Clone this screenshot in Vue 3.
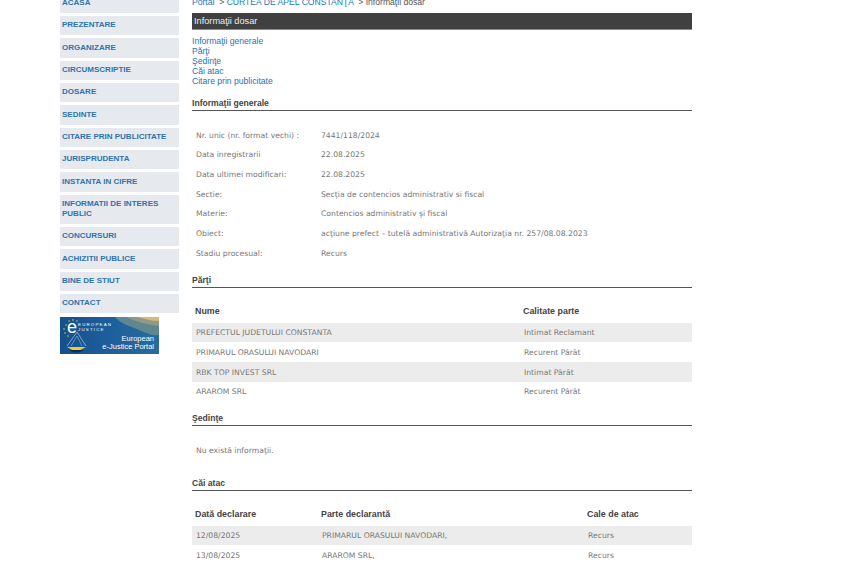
<script setup>
const nav = ['ACASA','PREZENTARE','ORGANIZARE','CIRCUMSCRIPTIE','DOSARE','SEDINTE','CITARE PRIN PUBLICITATE','JURISPRUDENTA','INSTANTA IN CIFRE','INFORMATII DE INTERES PUBLIC','CONCURSURI','ACHIZITII PUBLICE','BINE DE STIUT','CONTACT']
const links = ['Informaţii generale','Părţi','Şedinţe','Căi atac','Citare prin publicitate']
const info = [
  ['Nr. unic (nr. format vechi) :','7441/118/2024'],
  ['Data inregistrarii','22.08.2025'],
  ['Data ultimei modificari:','22.08.2025'],
  ['Sectie:','Secţia de contencios administrativ si fiscal'],
  ['Materie:','Contencios administrativ şi fiscal'],
  ['Obiect:','acţiune prefect – tutelă administrativă Autorizaţia nr. 257/08.08.2023'],
  ['Stadiu procesual:','Recurs'],
]
const parti = [
  ['PREFECTUL JUDETULUI CONSTANTA','Intimat Reclamant'],
  ['PRIMARUL ORASULUI NAVODARI','Recurent Pârât'],
  ['RBK TOP INVEST SRL','Intimat Pârât'],
  ['ARAROM SRL','Recurent Pârât'],
]
const cai = [
  ['12/08/2025','PRIMARUL ORASULUI NAVODARI,','Recurs'],
  ['13/08/2025','ARAROM SRL,','Recurs'],
]
</script>

<template>
  <div class="page">
    <aside class="side">
      <a v-for="n in nav" :key="n" class="nav" :class="{ two: n.length > 25 }">{{ n }}</a>
      <div class="banner">
        <svg class="banner-bg" width="99" height="37" viewBox="0 0 99 37">
          <defs>
            <linearGradient id="bg" x1="0" y1="0" x2="1" y2="0">
              <stop offset="0" stop-color="#14508c"/>
              <stop offset="0.5" stop-color="#1d5f9c"/>
              <stop offset="1" stop-color="#2a6c98"/>
            </linearGradient>
          </defs>
          <rect width="99" height="37" fill="url(#bg)"/>
          <path d="M55 0 L99 0 L99 18 C90 19 82 14 74 11 C66 8 59 5 55 0Z" fill="#5f8790"/>
          <path d="M66 0 L99 0 L99 9 C90 8 76 5 66 0Z" fill="#8f9a86"/>
          <path d="M78 0 L99 0 L99 4 C92 4 84 2 78 0Z" fill="#d3bb7c"/>
          <path d="M7 29 L17 15 L26 29" fill="none" stroke="#a8c6e0" stroke-width="0.7"/>
          <path d="M11 29 L17 19 L22 29" fill="none" stroke="#a8c6e0" stroke-width="0.5"/>
          <path d="M7 30 Q16 37 26 30 Z" fill="#e9cf2e"/>
          <path d="M9 33 Q16 38 24 33 Z" fill="#0f2d5c"/>
          <g fill="#f2dc58">
            <circle cx="6" cy="8" r="0.7"/><circle cx="4" cy="12" r="0.7"/><circle cx="5" cy="16" r="0.7"/>
            <circle cx="9" cy="4" r="0.7"/><circle cx="13" cy="3" r="0.7"/><circle cx="17" cy="4" r="0.7"/>
            <circle cx="8" cy="19" r="0.7"/>
          </g>
        </svg>
        <span class="e">e</span>
        <span class="eu">EUROPEAN<br>JUSTICE</span>
        <span class="portal">European<br>e-Justice Portal</span>
      </div>
    </aside>

    <main class="main">
      <div class="crumb"><a>Portal</a> &nbsp;&gt; <a>CURTEA DE APEL CONSTANŢA</a> &nbsp;&gt; Informaţii dosar</div>
      <h1 class="title">Informaţii dosar</h1>
      <nav class="links"><a v-for="l in links" :key="l">{{ l }}</a></nav>

      <h2 class="head first">Informaţii generale</h2>
      <dl class="info">
        <div v-for="r in info" :key="r[0]" class="info-row">
          <dt>{{ r[0] }}</dt><dd>{{ r[1] }}</dd>
        </div>
      </dl>

      <h2 class="head parti">Părţi</h2>
      <div class="tbl-head t2"><span>Nume</span><span>Calitate parte</span></div>
      <div v-for="(r, i) in parti" :key="r[0]" class="row t2" :class="{ odd: i % 2 === 0 }"><span>{{ r[0] }}</span><span>{{ r[1] }}</span></div>

      <h2 class="head sed">Şedinţe</h2>
      <p class="none">Nu există informaţii.</p>

      <h2 class="head cai">Căi atac</h2>
      <div class="tbl-head t3"><span>Dată declarare</span><span>Parte declarantă</span><span>Cale de atac</span></div>
      <div v-for="(r, i) in cai" :key="r[0]" class="row t3" :class="{ odd: i % 2 === 0 }"><span>{{ r[0] }}</span><span>{{ r[1] }}</span><span>{{ r[2] }}</span></div>
    </main>
  </div>
</template>

<style>
html, body { margin: 0; height: 580px; overflow: hidden; background: #fff; }
</style>

<style scoped>
.page {
  display: flex;
  align-items: flex-start;
  gap: 13px;
  margin-top: -7px;
  padding-left: 60px;
  width: 632px;
  font-family: "Liberation Sans", Arial, sans-serif;
}
.side { width: 119px; display: flex; flex-direction: column; gap: 3px; flex: none; margin-top: 0.6px; }
.nav {
  display: flex;
  align-items: center;
  box-sizing: border-box;
  min-height: 19.33px;
  padding: 0 2px;
  background: #e6e9ee;
  color: #2f74ac;
  font-weight: 700;
  font-size: 8px;
  line-height: 10.5px;
}
.nav.two { height: 29.5px; }
.banner { position: relative; width: 99px; height: 37px; margin-top: 0.4px; color: #fff; overflow: hidden; }
.banner-bg { display: block; }
.e { position: absolute; left: 7px; top: 1px; font-size: 18px; line-height: 18px; }
.eu { position: absolute; left: 18px; top: 5px; font-size: 4.4px; line-height: 5px; letter-spacing: 1.2px; }
.portal { position: absolute; right: 5px; top: 18px; font-size: 7.5px; line-height: 8px; text-align: right; }

.main { flex: 1; min-width: 0; }
.crumb { height: 17px; padding-top: 3px; font-size: 8.6px; line-height: 12px; color: #555; white-space: nowrap; }
.crumb a { color: #1a75bb; }
.title {
  margin: 0;
  height: 16px;
  padding-left: 2px;
  border-bottom: 1px solid #8a8a8a;
  background: #404040;
  color: #eee;
  font-size: 9.2px;
  font-weight: 400;
  line-height: 16px;
}
.links { display: flex; flex-direction: column; margin-top: 6px; font-size: 8.6px; line-height: 10px; color: #1a75bb; }
.head {
  margin: 0;
  height: 13px;
  border-bottom: 1px solid #555;
  font-size: 8.6px;
  font-weight: 700;
  line-height: 12px;
  color: #444;
}
.head.first { margin-top: 11px; }
.info { margin: 14.4px 0 0; }
.info-row { display: flex; height: 19.7px; align-items: center; padding-left: 4px; font-family: "DejaVu Sans", sans-serif; font-size: 7.67px; color: #777; }
.info-row dt { width: 125px; flex: none; }
.info-row dd { margin: 0; }
.head.parti { margin-top: 10.6px; }
.t2 { display: grid; grid-template-columns: 328px 1fr; }
.t3 { display: grid; grid-template-columns: 126px 266px 1fr; }
.tbl-head { height: 35px; box-sizing: border-box; padding: 17px 0 0 3px; font-size: 8.9px; font-weight: 700; line-height: 12px; color: #444; }
.row { height: 19.7px; align-items: center; padding-left: 4px; font-family: "DejaVu Sans", sans-serif; font-size: 7.67px; color: #777; }
.row.odd { background: #ececec; }
.head.sed { margin-top: 10px; }
.none { margin: 0; padding: 19.5px 0 0 4px; height: 19px; font-family: "DejaVu Sans", sans-serif; font-size: 7.67px; line-height: 12px; color: #777; }
.head.cai { margin-top: 12.5px; }
</style>
